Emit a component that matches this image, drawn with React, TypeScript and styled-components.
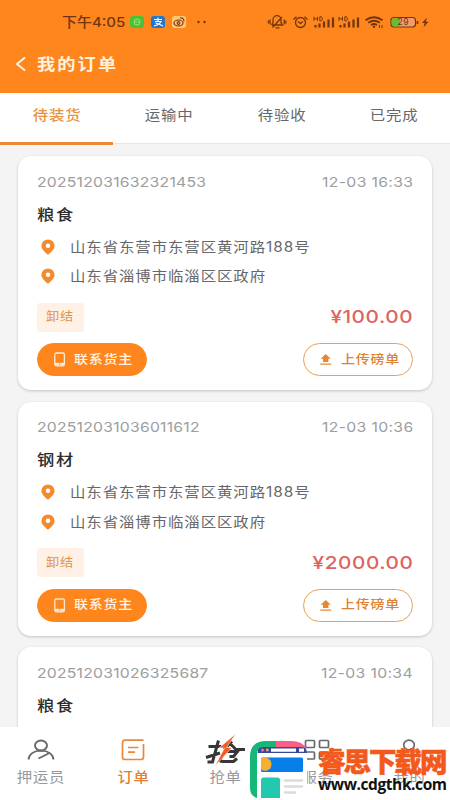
import React from 'react';
import styled, { createGlobalStyle } from 'styled-components';

const ORANGE = '#ff861d';

const Global = createGlobalStyle`
  * { box-sizing: border-box; }
  html, body { margin: 0; padding: 0; overflow: hidden; }
  body { font-family: Inter, "Noto Sans CJK SC", sans-serif; background: #f4f4f5; }
`;

const Screen = styled.div`
  position: relative;
  width: 450px;
  height: 800px;
  overflow: hidden;
  display: flex;
  flex-direction: column;
  background: #f4f4f5;
`;

type TextProps = {
  $size: number;
  $color: string;
  $gap?: number;
  $weight?: number;
  $stretch?: number;
  $origin?: string;
};

const Text = styled.span<TextProps>`
  display: block;
  white-space: nowrap;
  line-height: 20px;
  font-size: ${p => p.$size}px;
  font-weight: ${p => p.$weight ?? 400};
  color: ${p => p.$color};
  letter-spacing: ${p => p.$gap ?? 0}px;
  margin-right: ${p => -(p.$gap ?? 0)}px;
  transform: scaleX(${p => p.$stretch ?? 1.1});
  transform-origin: ${p => p.$origin ?? 'left'} center;
`;

const Header = styled.header`
  flex: none;
  height: 93px;
  background: ${ORANGE};
`;

const StatusBar = styled.div`
  display: flex;
  justify-content: space-between;
  align-items: center;
  height: 44px;
  padding: 0 20px 0 62px;
`;

const StatusGroup = styled.div`
  display: flex;
  align-items: center;
`;

const Clock = styled.div`
  width: 68px;
`;

const AppBadge = styled.span<{ $bg: string }>`
  display: flex;
  width: 14px;
  height: 12px;
  margin-right: 7px;
  border-radius: 3px;
  background: ${p => p.$bg};
`;

const TitleBar = styled.div`
  display: flex;
  align-items: center;
  height: 40px;
  padding-left: 15px;
  gap: 10px;
`;

const Tabs = styled.nav`
  flex: none;
  display: grid;
  grid-template-columns: repeat(4, 1fr);
  height: 51px;
  background: #fff;
  border-bottom: 1px solid #e6e6e6;
`;

const Tab = styled.div<{ $active?: boolean }>`
  display: flex;
  justify-content: center;
  height: 52px;
  padding-top: 12px;
  border-bottom: 3px solid ${p => (p.$active ? '#ec8b35' : 'transparent')};
`;

const List = styled.main`
  flex: 1;
  min-height: 0;
  overflow: hidden;
  display: flex;
  flex-direction: column;
  gap: 11.7px;
  padding: 12px 18px 0;
`;

const Card = styled.article`
  flex: none;
  height: 234px;
  padding: 15px 19px 0;
  border-radius: 13px;
  background: #fff;
  box-shadow: 0 1px 3px rgba(0, 0, 0, 0.2);
`;

const Row = styled.div<{ $h: number; $top?: number }>`
  display: flex;
  justify-content: space-between;
  align-items: center;
  height: ${p => p.$h}px;
  padding-top: ${p => p.$top ?? 0}px;
`;

const Place = styled.div`
  display: flex;
  align-items: center;
  height: 29.5px;
  padding-left: 4px;
  gap: 15px;
`;

const Tag = styled.div`
  display: flex;
  align-items: center;
  width: 47px;
  height: 29px;
  padding-left: 9px;
  border-radius: 3px;
  background: #fff1e5;
`;

const Button = styled.button<{ $filled?: boolean }>`
  display: flex;
  align-items: center;
  gap: ${p => (p.$filled ? 8 : 9)}px;
  width: 110px;
  height: 33px;
  padding: 0 0 0 15px;
  border: 1px solid ${p => (p.$filled ? ORANGE : '#e7a05a')};
  border-radius: 17px;
  background: ${p => (p.$filled ? ORANGE : '#fff')};
  font-family: inherit;
`;

const BottomNav = styled.nav`
  flex: none;
  display: flex;
  justify-content: center;
  height: 73px;
  background: #fff;
`;

const NavItem = styled.div`
  flex: 0 0 92px;
  display: flex;
  flex-direction: column;
  align-items: center;
  padding-top: 6px;
`;

const NavIcon = styled.div`
  display: flex;
  align-items: center;
  justify-content: center;
  height: 34px;
`;

const Watermark = styled.aside`
  position: absolute;
  left: 249px;
  top: 740px;
  display: flex;
  gap: 10px;
`;

const WatermarkName = styled.div`
  font: 900 27.5px/30px "Noto Sans CJK SC", sans-serif;
  letter-spacing: -2px;
  white-space: nowrap;
  color: #f2591b;
  -webkit-text-stroke: 0.5px #f2591b;
  margin-top: 5px;
`;

const WatermarkUrl = styled.div`
  margin-top: 1px;
  font: 700 15.5px/16px "Open Sans", sans-serif;
  letter-spacing: -0.42px;
  white-space: nowrap;
  color: #111;
`;

const Pin = () => (
  <svg width="14" height="16" viewBox="0 0 14 16">
    <path fill="#f48a2e" fillRule="evenodd" d="M7 .5a6.6 6.6 0 0 1 6.6 6.4C13.600 10.300 9.500 13.500 7 15.700 4.500 13.500.4 10.300.4 6.900A6.600 6.600 0 0 1 7 .5Zm0 4a2.300 2.300 0 1 0 0 4.600 2.300 2.300 0 0 0 0-4.600Z" />
  </svg>
);

const Phone = () => (
  <svg width="13" height="15" viewBox="0 0 13 15" fill="none">
    <rect x="1.800" y="1" width="9.600" height="12.800" rx="1.500" stroke="#ffead2" strokeWidth="1.300" />
    <path d="M2 12h9.200" stroke="#ffead2" strokeWidth="2.400" />
    <circle cx="6.600" cy="12" r=".7" fill={ORANGE} />
  </svg>
);

const Upload = () => (
  <svg width="13" height="13" viewBox="0 0 13 13">
    <path fill="#e98630" d="M6.700 1 11.800 5.700H9.400V9H4V5.700H1.600ZM1.300 10.500h10.900v1.300H1.300Z" />
  </svg>
);

const StatusIcons = () => (
  <svg width="165" height="20" viewBox="265 12 165 20" fill="none" stroke="#713611" strokeWidth="1.300">
    <path d="M272 25h10.500l-1.500-2.300v-3a4 4 0 0 0-8 0v3L271.500 25M275.500 27.800h4M272.500 27.500l9.500-10.500M270 19.500v5M268.400 20.500v3M284.200 19.500v5M285.800 20.500v3" />
    <circle cx="300.500" cy="22.500" r="5" />
    <path d="M298 21.500l2.500 2 2.500-2M293.500 19.500l3-2.800M304.500 16.700l3 2.800" />
    {[0, 25].map(x => (
      <g key={x} transform={`translate(${x} 0)`}>
        <path d="M315.500 25v2.500M319.500 23.500v4M324 21.500v6M328.500 19.500v8M333 17.500v10" strokeWidth="2.200" />
        <path d="M314 16.800v4M317.500 16.800v4M314 18.800h3.500M319.800 16.800v4h1.700q2.200-2 0-4Z" strokeWidth="1" />
      </g>
    ))}
    <path d="M365.500 20.300q8.500-6.200 17 0M368.300 22.800q5.700-4 11.500 0M371 25q3-1.900 6 0" strokeWidth="1.900" />
    <circle cx="374" cy="26.700" r="1.200" fill="#713611" stroke="none" />
    <path d="M379.500 28v-3M382 25v3" strokeWidth="1" />
    <rect x="391" y="17.500" width="24.500" height="9.500" rx="3" fill="#f59a68" strokeWidth="1.200" />
    <path d="M394 18.200h6v8.200h-6q-2.300 0-2.300-2v-4.200q0-2 2.300-2Z" fill="#67bd2d" stroke="none" />
    <path d="M417.500 21v3" strokeWidth="1.600" />
    <text x="397.500" y="25.400" fontSize="8.500" fontFamily="Inter" fill="#713611" stroke="none" textLength="11">29</text>
    <path d="M427 17.500l-5 5.500h2.700l-1.200 4.500 5-5.700h-2.700Z" fill="#713611" stroke="none" />
  </svg>
);

const PersonIcon = () => (
  <svg width="28" height="22" viewBox="0 0 28 22" fill="none" stroke="#66676a" strokeWidth="1.900">
    <ellipse cx="14" cy="6.500" rx="6" ry="5" />
    <path d="M1.500 20.500C2 15.500 6.500 11.800 14 11.600C21.500 11.800 26 15.500 26.500 20.500M11.500 19.500L21.500 14.500" />
  </svg>
);

const OrderIcon = () => (
  <svg width="24" height="22" viewBox="0 0 24 22" fill="none" stroke="#e9873a" strokeWidth="1.700">
    <path d="M22.500 1.200H4Q1.500 1.200 1.500 3.700V18Q1.500 20.500 4 20.500H20Q22.500 20.500 22.500 18V5M7 8.500H17.500M7 13.200H14" />
  </svg>
);

const GrabIcon = () => (
  <svg width="44" height="34" viewBox="203 731 44 34" fill="none">
    <path d="M208.500 744.500h13M218.500 738.500l-6 21.500h-5M206 755.500l14-4.500M232 739.500l-8 8M230.500 742l5.500 5.500h9M225 749.500h12.500l-4 5h-4M224.500 750l-4 7q-1.500 2.500 2 2.500h11l3.500-3" stroke="#393638" strokeWidth="3" />
    <path d="M236 731.500l-17 14.500h5.500l-9.500 18 17-18.500h-5.500Z" fill="#f35a20" stroke="#fff" strokeWidth=".6" />
  </svg>
);

const ServiceIcon = () => (
  <svg width="26" height="22" viewBox="0 0 26 22" fill="none" stroke="#68696c" strokeWidth="1.700">
    <rect x="1.500" y="1.500" width="9" height="7" rx="1" />
    <rect x="15.500" y="1.500" width="9" height="7" rx="1" />
    <rect x="1.500" y="13" width="9" height="7" rx="1" />
    <rect x="15.500" y="13" width="9" height="7" rx="1" />
  </svg>
);

const MineIcon = () => (
  <svg width="24" height="22" viewBox="0 0 24 22" fill="none" stroke="#68696c" strokeWidth="1.700">
    <ellipse cx="12" cy="6" rx="5.300" ry="4.800" />
    <path d="M2 20q0-8 10-8t10 8" stroke="#a7a7a8" />
  </svg>
);

const SiteLogo = () => (
  <svg width="59" height="58" viewBox="249 740 59 58">
    <path fill="#fff" d="M255 750h52v48h-52Z" />
    <path fill="#17b877" d="M266 741h11v10H257v47q-7-2-7-10v-31q0-16 16-16Z" />
    <path fill="#fa5f86" d="M276 741h15q12 0 15.500 8H276Z" />
    <path fill="#35499a" d="M257.500 753q0-6 6-6H301q6 0 6 6Z" />
    <path fill="#fff" d="M271 748.500h25v3.200h-25Zm28 0h5v3.200h-5Z" />
    <circle cx="262.500" cy="750" r="1.500" fill="#f47496" />
    <circle cx="267.300" cy="750" r="1.400" fill="#f4b044" />
    <rect x="261" y="757.500" width="42" height="14.500" rx="1.500" fill="#087ee8" />
    <path fill="#f8ae31" d="M261 758.500q3-1.500 6-.5a6.600 6.600 0 0 1 0 12.500q-3 1-6-1Z" />
    <path fill="#23c9ae" d="M261 780q0-2.500 2.500-2.500H277.500q2.500 0 2.500 2.500V798h-19Z" />
    <path d="M285 780.500h17M285 786.500h17M285 792.500h10" stroke="#d9dcdd" strokeWidth="2.600" strokeLinecap="round" />
  </svg>
);

type Order = { no: string; time: string; goods: string; price: string };

const orders: Order[] = [
  { no: '202512031632321453', time: '12-03 16:33', goods: '粮食', price: '¥100.00' },
  { no: '202512031036011612', time: '12-03 10:36', goods: '钢材', price: '¥2000.00' },
  { no: '202512031026325687', time: '12-03 10:34', goods: '粮食', price: '¥2000.00' },
];

const places = ['山东省东营市东营区黄河路188号', '山东省淄博市临淄区区政府'];

const OrderCard = ({ order }: { order: Order }) => (
  <Card>
    <Row $h={21}>
      <Text $size={13.7} $color="#9d9ea0" $gap={0.2} $stretch={1.15}>{order.no}</Text>
      <Text $size={13.7} $color="#9d9ea0" $gap={0.3} $stretch={1.15} $origin="right">{order.time}</Text>
    </Row>
    <Row $h={40} $top={5}>
      <Text $size={15} $color="#2c2c2d" $gap={1.6} $weight={500} $stretch={1.15}>{order.goods}</Text>
    </Row>
    {places.map(place => (
      <Place key={place}>
        <Pin />
        <Text $size={14} $color="#66676a" $gap={0.85}>{place}</Text>
      </Place>
    ))}
    <Row $h={52}>
      <Tag><Text $size={12} $color="#df9147" $gap={0.8}>卸结</Text></Tag>
      <Text $size={17.6} $color="#de6460" $weight={500} $gap={0.45} $stretch={1.18} $origin="right">{order.price}</Text>
    </Row>
    <Row $h={33}>
      <Button $filled>
        <Phone />
        <Text $size={12.5} $color="#fff5e8" $gap={0.7} $weight={500} $stretch={1.12}>联系货主</Text>
      </Button>
      <Button>
        <Upload />
        <Text $size={12.5} $color="#dc8234" $gap={0.7} $weight={500} $stretch={1.12}>上传磅单</Text>
      </Button>
    </Row>
  </Card>
);

const navItems = [
  { label: '押运员', icon: <PersonIcon /> },
  { label: '订单', icon: <OrderIcon />, active: true },
  { label: '抢单', icon: <GrabIcon /> },
  { label: '服务', icon: <ServiceIcon /> },
  { label: '我的', icon: <MineIcon /> },
];

export default function App() {
  return (
    <Screen>
      <Global />
      <Header>
        <StatusBar>
          <StatusGroup>
            <Clock><Text $size={13.6} $color="#713611" $weight={500}>下午4:05</Text></Clock>
            <AppBadge $bg="#4bc136">
              <svg width="14" height="12" fill="none" stroke="#9be381"><circle cx="7" cy="6" r="3" /><path d="M5 6h4" /></svg>
            </AppBadge>
            <AppBadge $bg="#2576c7">
              <svg width="14" height="12" fill="none" stroke="#fff" strokeWidth="1.200"><path d="M3 3.500h8M7 1.500v4M4 5.500h6q-2 3.500-7 4.500M4.500 7q4 1 7.500 3" /></svg>
            </AppBadge>
            <AppBadge $bg="#f8cb70">
              <svg width="14" height="12" fill="none" stroke="#8c2f1c" strokeWidth="1.200"><ellipse cx="6.500" cy="7" rx="4.500" ry="3" /><circle cx="6.500" cy="7" r="1.300" /><path d="M8 2q4-.5 4 3.500" /></svg>
            </AppBadge>
            <svg width="20" height="6" fill="#713611"><circle cx="5.500" cy="3" r="1.200" /><circle cx="11.500" cy="3" r="1.200" /></svg>
          </StatusGroup>
          <StatusIcons />
        </StatusBar>
        <TitleBar>
          <svg width="12" height="16" viewBox="0 0 12 16" fill="none" stroke="#fff2df" strokeWidth="2"><path d="M10 1.500L2 8l8 6.500" /></svg>
          <Text $size={16} $color="#fff2df" $gap={1.8} $weight={700} $stretch={1.14}>我的订单</Text>
        </TitleBar>
      </Header>
      <Tabs>
        {['待装货', '运输中', '待验收', '已完成'].map((label, i) => (
          <Tab key={label} $active={i === 0}>
            <Text $size={14} $color={i === 0 ? '#e8913f' : '#66676a'} $gap={0.7} $weight={i === 0 ? 500 : 400} $origin="center">{label}</Text>
          </Tab>
        ))}
      </Tabs>
      <List>
        {orders.map(order => <OrderCard key={order.no} order={order} />)}
      </List>
      <BottomNav>
        {navItems.map(item => (
          <NavItem key={item.label}>
            <NavIcon>{item.icon}</NavIcon>
            <Text $size={14} $color={item.active ? '#df8134' : '#98999b'} $gap={0.6} $weight={item.active ? 500 : 400} $origin="center">{item.label}</Text>
          </NavItem>
        ))}
      </BottomNav>
      <Watermark>
        <SiteLogo />
        <div>
          <WatermarkName>睿思下载网</WatermarkName>
          <WatermarkUrl>www.cdgthk.com</WatermarkUrl>
        </div>
      </Watermark>
    </Screen>
  );
}
